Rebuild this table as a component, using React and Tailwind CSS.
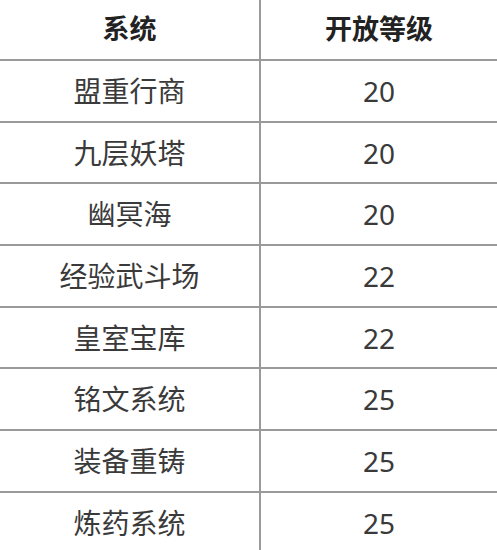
import React from 'react';

const rows = [
  ['盟重行商', '20'],
  ['九层妖塔', '20'],
  ['幽冥海', '20'],
  ['经验武斗场', '22'],
  ['皇室宝库', '22'],
  ['铭文系统', '25'],
  ['装备重铸', '25'],
  ['炼药系统', '25'],
];

const font = { fontFamily: '"Noto Sans", "Noto Sans CJK SC", sans-serif' };

export default function App() {
  return (
    <div className="w-[497px] h-[550px] overflow-hidden bg-white" style={font}>
      {/* Header */}
      <div className="grid grid-cols-[261px_1fr] h-[61px] border-b-2 border-[#9a9a9a] text-[#222] text-[27px] font-bold">
        <div className="flex items-center justify-center border-r-2 border-[#9a9a9a]">系统</div>
        <div className="flex items-center justify-center">开放等级</div>
      </div>

      {rows.map(([name, level]) => (
        <div
          key={name}
          className="grid grid-cols-[261px_1fr] h-[61.7px] border-b-2 border-[#9a9a9a] text-[#3a3a3a] text-[28px]"
        >
          <div className="flex items-center justify-center border-r-2 border-[#9a9a9a]">{name}</div>
          <div className="flex items-center justify-center">{level}</div>
        </div>
      ))}
    </div>
  );
}
